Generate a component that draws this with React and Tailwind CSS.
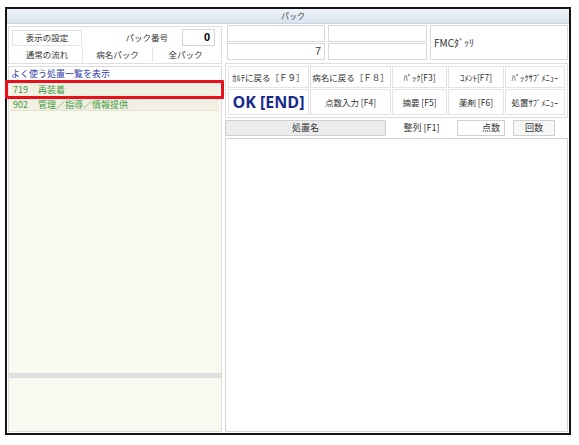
import React from 'react';

const jp = { fontFamily: '"Noto Sans CJK JP", "Noto Sans", sans-serif' };

const btnRow1 = [
  { label: 'ｶﾙﾃに戻る［Ｆ９］', w: 'w-[81px]' },
  { label: '病名に戻る［Ｆ８］', w: 'w-[81px]' },
  { label: 'ﾊﾟｯｸ[F3]', w: 'w-[55px]' },
  { label: 'ｺﾒﾝﾄ[F7]', w: 'w-[56px]' },
  { label: 'ﾊﾟｯｸｻﾌﾞﾒﾆｭｰ', w: 'flex-1' },
];

const btnRow2 = [
  { label: '点数入力 [F4]', w: 'w-[81px]' },
  { label: '摘要 [F5]', w: 'w-[55px]' },
  { label: '薬剤 [F6]', w: 'w-[56px]' },
  { label: '処置ｻﾌﾞﾒﾆｭｰ', w: 'flex-1' },
];

const App = () => {
  return (
    <div className="w-[579px] h-[445px] bg-white pt-[7px] pl-[5px]" style={jp}>
      <div className="w-[566px] h-[428px] border-2 border-[#141414] flex flex-col bg-white">
        {/* title bar */}
        <div className="h-[15px] bg-gradient-to-b from-[#eef3f8] to-[#d9e3ee] border-b border-[#c9d3de] flex items-center justify-center pl-[10px] text-[8px] text-[#444]">
          パック
        </div>

        <div className="flex-1 flex gap-[3px] pl-[1px] min-h-0">
          {/* left column */}
          <div className="w-[214px] flex flex-col relative">
            <div className="mt-[2px] h-[38px] border border-[#dedede] bg-white px-[3px] pt-[2px] flex flex-col text-[8.5px] text-[#333]">
              <div className="flex items-center h-[17px]">
                <div className="w-[70px] h-[16px] border border-[#e4e4e4] flex items-center justify-center">表示の設定</div>
                <div className="w-[88px] text-right pr-[2px]">パック番号</div>
                <div className="ml-[12px] w-[33px] h-[17px] border border-[#d4d4d4] flex items-center justify-end pr-[4px] text-[11px] font-bold text-black" style={{ fontFamily: '"Liberation Sans", sans-serif' }}>0</div>
              </div>
              <div className="flex items-center h-[16px]">
                <div className="w-[71px] h-[15px] border-r border-[#e4e4e4] flex items-center justify-center">通常の流れ</div>
                <div className="w-[70px] h-[15px] border-r border-[#e4e4e4] flex items-center justify-center">病名パック</div>
                <div className="flex-1 h-[15px] flex items-center justify-center">全パック</div>
              </div>
            </div>

            <div className="mt-[2px] flex-1 border border-[#dcdcdc] bg-[#f9f8f1] flex flex-col">
              <div className="h-[14px] bg-white px-[2px] flex items-center text-[9px] text-[#3040a8]">よく使う処置一覧を表示</div>
              <div className="h-[18px] mx-[2px] bg-[#f1f0e2] border-b border-[#e2e1d4] flex items-center px-[2px] text-[9px] text-[#3e9a3e]">
                <span className="w-[25px]">719</span>
                <span>再装着</span>
              </div>
              <div className="h-[12px] mx-[2px] bg-[#f1f0e2] border-b border-[#e2e1d4] flex items-center px-[2px] text-[9px] leading-[11px] text-[#3e9a3e]">
                <span className="w-[25px]">902</span>
                <span>管理／指導／情報提供</span>
              </div>
            </div>

            <div className="h-[3px] bg-[#e0e0e0]"></div>
            <div className="h-[55px] border border-[#dcdcdc] bg-[#f9f8f1] mb-[1px]"></div>

            {/* highlight */}
            <div className="absolute left-[-3px] top-[56px] w-[219px] h-[19px] border-[3px] border-[#e8101a] rounded-[1px] pointer-events-none"></div>
          </div>

          {/* right column */}
          <div className="flex-1 flex flex-col pr-[1px]">
            <div className="mt-[1px] h-[36px] flex gap-[3px] text-[9px] text-[#333]">
              <div className="flex flex-col gap-[1px] pl-[2px]">
                <div className="w-[98px] h-[17px] border border-[#d8d8d8] bg-white"></div>
                <div className="w-[98px] h-[17px] border border-[#d8d8d8] bg-white flex items-center justify-end pr-[3px] text-[11px] text-[#444]" style={{ fontFamily: '"Liberation Sans", sans-serif' }}>7</div>
              </div>
              <div className="flex flex-col gap-[1px]">
                <div className="w-[99px] h-[17px] border border-[#d8d8d8] bg-white"></div>
                <div className="w-[99px] h-[17px] border border-[#d8d8d8] bg-white"></div>
              </div>
              <div className="flex-1 h-[35px] border border-[#d8d8d8] bg-white flex items-center pl-[3px] text-[10px] text-[#333]">FMCﾀﾞｯﾘ</div>
            </div>

            <div className="mt-[2px] h-[55px] border border-[#dcdcdc] bg-white p-[2px] flex flex-col gap-[1px] text-[8.5px] text-[#333]">
              <div className="flex gap-[1px] h-[24px]">
                {btnRow1.map((b, i) => (
                  <div key={i} className={`${b.w} border border-[#e3e3e3] flex items-center justify-center whitespace-nowrap`}>{b.label}</div>
                ))}
              </div>
              <div className="flex gap-[1px] flex-1">
                <div className="w-[81px] border border-[#e3e3e3] flex items-center justify-center text-[16px] font-bold text-[#182a8c] whitespace-nowrap" style={{ fontFamily: '"Open Sans", "Liberation Sans", sans-serif' }}>OK [END]</div>
                {btnRow2.map((b, i) => (
                  <div key={i} className={`${b.w} border border-[#e3e3e3] flex items-center justify-center whitespace-nowrap`}>{b.label}</div>
                ))}
              </div>
            </div>

            <div className="h-[19px] flex items-center text-[9px] text-[#333] pt-[1px]">
              <div className="w-[161px] h-[16px] bg-[#ececec] border border-[#d0d0d0] flex items-center justify-center">処置名</div>
              <div className="w-[71px] text-center">整列 [F1]</div>
              <div className="w-[48px] h-[16px] border border-[#d0d0d0] bg-white flex items-center justify-end pr-[4px]">点数</div>
              <div className="ml-[8px] w-[42px] h-[16px] border border-[#d0d0d0] bg-[#f7f7f7] flex items-center justify-center">回数</div>
            </div>

            <div className="flex-1 mt-[1px] mb-[1px] border border-[#d4d4d4] bg-white"></div>
          </div>
        </div>
      </div>
    </div>
  );
};

export default App;
